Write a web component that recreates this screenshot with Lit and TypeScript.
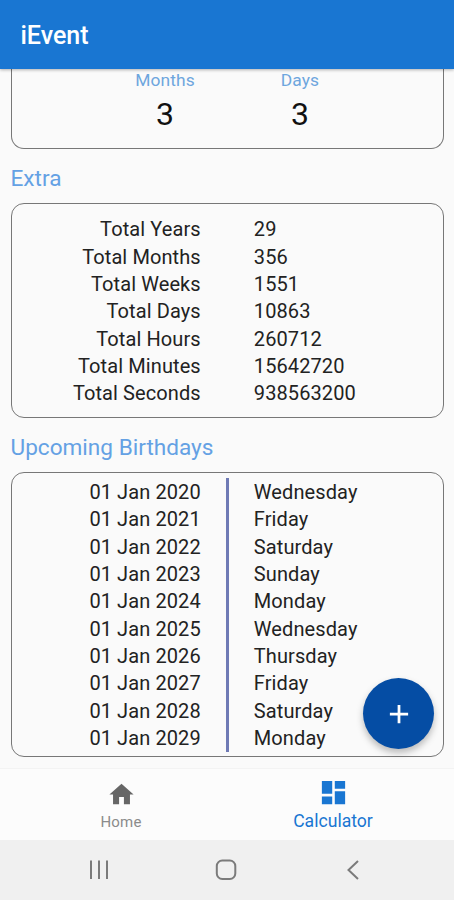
import { LitElement, html, css } from "lit";
import { customElement } from "lit/decorators.js";

const TOTALS: [string, string][] = [
  ["Total Years", "29"],
  ["Total Months", "356"],
  ["Total Weeks", "1551"],
  ["Total Days", "10863"],
  ["Total Hours", "260712"],
  ["Total Minutes", "15642720"],
  ["Total Seconds", "938563200"],
];

const BIRTHDAYS: [string, string][] = [
  ["01 Jan 2020", "Wednesday"],
  ["01 Jan 2021", "Friday"],
  ["01 Jan 2022", "Saturday"],
  ["01 Jan 2023", "Sunday"],
  ["01 Jan 2024", "Monday"],
  ["01 Jan 2025", "Wednesday"],
  ["01 Jan 2026", "Thursday"],
  ["01 Jan 2027", "Friday"],
  ["01 Jan 2028", "Saturday"],
  ["01 Jan 2029", "Monday"],
];

@customElement("app-root")
export class AppRoot extends LitElement {
  static styles = css`
    :host {
      display: flex;
      flex-direction: column;
      width: 454px;
      height: 900px;
      overflow: hidden;
      background: #fafafa;
      color: #222;
      font-family: Roboto, sans-serif;
    }
    * {
      box-sizing: border-box;
    }
    .bar {
      flex: none;
      height: 69px;
      padding: 2px 20.5px 0;
      display: flex;
      align-items: center;
      background: #1976d2;
      color: #fff;
      font-size: 25px;
      font-weight: 500;
      box-shadow: 0 1px 3px rgba(0, 0, 0, 0.3);
      z-index: 1;
    }
    .content {
      flex: 1;
      min-height: 0;
      position: relative;
      padding: 0 10.5px;
    }
    .card {
      border: 1.4px solid #777;
      border-radius: 13px;
    }
    .age {
      height: 80px;
      border-top: 0;
      border-radius: 0 0 13px 13px;
      display: grid;
      grid-template-columns: 135px 135px;
      justify-content: start;
      padding-left: 86px;
      text-align: center;
    }
    .unit {
      font-size: 17.4px;
      line-height: 20px;
      margin-top: 1px;
      letter-spacing: 0.1px;
      color: #6ea6de;
    }
    .count {
      font-size: 32px;
      line-height: 38px;
      margin-top: 5px;
      color: #111;
    }
    .heading {
      font-size: 22.6px;
      line-height: 28px;
      color: #64a1e4;
    }
    .h-extra {
      margin: 16px 0 10px;
    }
    .h-birthdays {
      margin: 16px 0 10px;
    }
    .totals {
      height: 215px;
      padding-top: 12.4px;
    }
    .birthdays {
      height: 285px;
      display: grid;
      grid-template-columns: 214px 3px 1fr;
      padding: 5px 0 6px;
    }
    .row {
      display: grid;
      grid-template-columns: 189.3px 1fr;
      column-gap: 53px;
    }
    .row,
    .cell {
      font-size: 20px;
      line-height: 27.3px;
      letter-spacing: 0.1px;
    }
    .label {
      text-align: right;
    }
    .dates {
      text-align: right;
      padding: 1.2px 24.7px 0 0;
    }
    .days {
      padding: 1.2px 0 0 25.3px;
    }
    .rule {
      background: #6f7ab5;
    }
    .fab {
      position: absolute;
      right: 20px;
      bottom: 19px;
      width: 71px;
      height: 71px;
      border: 0;
      padding: 0;
      border-radius: 50%;
      background: #054da4;
      display: flex;
      align-items: center;
      justify-content: center;
      box-shadow: 0 4px 7px rgba(0, 0, 0, 0.26);
    }
    .tabs {
      flex: none;
      height: 72px;
      display: grid;
      grid-template-columns: 240px 186px;
      border-top: 1px solid #f3f3f3;
      background: #fcfcfc;
    }
    .tab {
      display: flex;
      flex-direction: column;
      align-items: center;
      padding-top: 11px;
      color: #737373;
      font-size: 15px;
      line-height: 20px;
      letter-spacing: 0.2px;
    }
    .tab svg {
      display: block;
      margin-bottom: 3px;
    }
    .home {
      padding-left: 2px;
      color: #8b8b8b;
    }
    .active {
      padding-top: 8px;
      color: #1976d2;
      font-size: 17.6px;
      letter-spacing: 0;
    }
    .system {
      flex: none;
      height: 60px;
      background: #f0f0f0;
    }
    .system svg {
      display: block;
    }
  `;

  render() {
    return html`
      <header class="bar">iEvent</header>
      <main class="content">
        <section class="card age">
          <div>
            <div class="unit">Months</div>
            <div class="count">3</div>
          </div>
          <div>
            <div class="unit">Days</div>
            <div class="count">3</div>
          </div>
        </section>
        <div class="heading h-extra">Extra</div>
        <section class="card totals">
          ${TOTALS.map(
            ([label, value]) => html`<div class="row">
              <span class="label">${label}</span><span>${value}</span>
            </div>`
          )}
        </section>
        <div class="heading h-birthdays">Upcoming Birthdays</div>
        <section class="card birthdays">
          <div class="dates">
            ${BIRTHDAYS.map(([date]) => html`<div class="cell">${date}</div>`)}
          </div>
          <div class="rule"></div>
          <div class="days">
            ${BIRTHDAYS.map(([, day]) => html`<div class="cell">${day}</div>`)}
          </div>
        </section>
        <button class="fab" aria-label="Add">
          <svg width="30" height="30" viewBox="0 0 24 24" fill="#fff">
            <path d="M19.3 13.1h-6.2v6.2h-2.2v-6.2H4.7v-2.2h6.2V4.7h2.2v6.2h6.2z" />
          </svg>
        </button>
      </main>
      <nav class="tabs">
        <div class="tab home">
          <svg width="29" height="29" viewBox="0 0 24 24" fill="#666">
            <path d="M10 20v-6h4v6h5v-8h3L12 3 2 12h3v8z" />
          </svg>
          <span>Home</span>
        </div>
        <div class="tab active">
          <svg width="31" height="31" viewBox="0 0 24 24" fill="#1976d2">
            <path d="M3 13h8V3H3v10zm0 8h8v-6H3v6zm10 0h8V11h-8v10zm0-18v6h8V3h-8z" />
          </svg>
          <span>Calculator</span>
        </div>
      </nav>
      <footer class="system">
        <svg width="454" height="60" viewBox="0 0 454 60" fill="none" stroke="#7b7b7b" stroke-width="2">
          <path d="M91 20.5v18.5M99 20.5v18.5M107 20.5v18.5" />
          <rect x="216.8" y="20.5" width="18.5" height="18.5" rx="5.5" />
          <path d="M358 21l-9.5 9 9.5 9" />
        </svg>
      </footer>
    `;
  }
}
